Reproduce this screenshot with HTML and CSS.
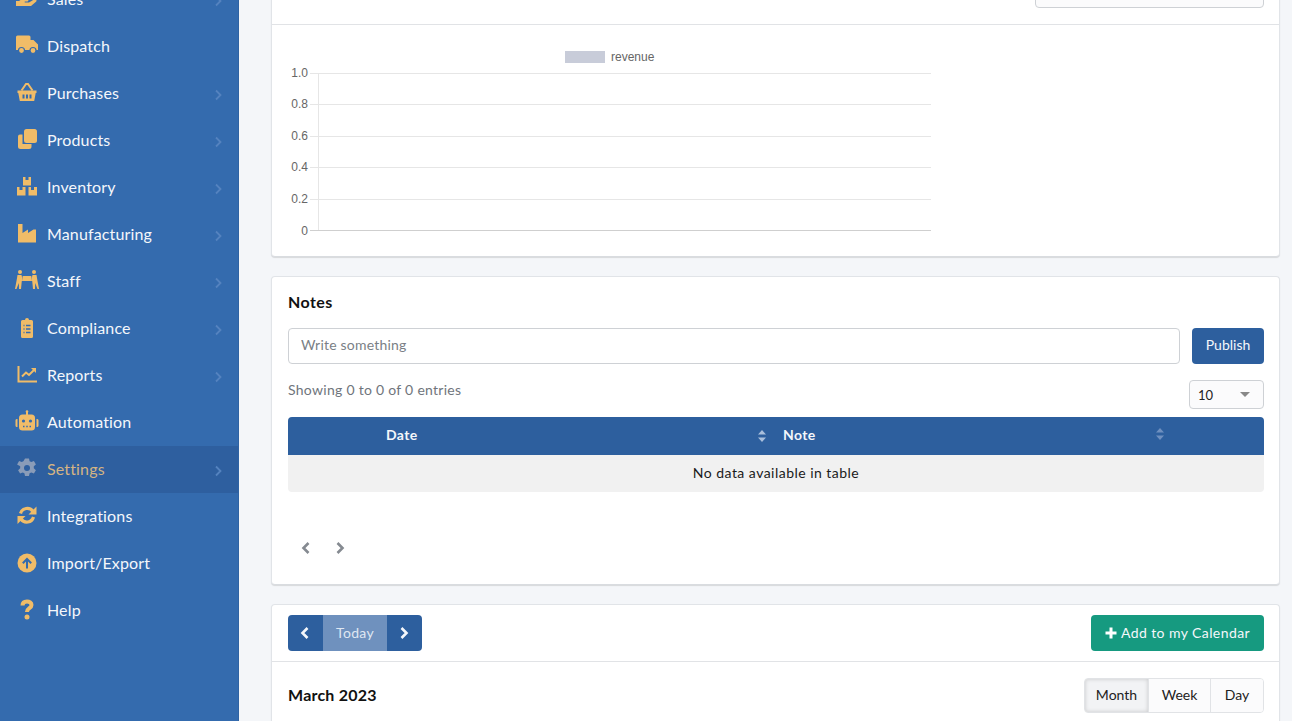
FILE: index.html
```html
<!DOCTYPE html>
<html lang="en">
<head>
<meta charset="utf-8">
<title>Dashboard</title>
<link rel="stylesheet" href="styles.css">
</head>
<body>
<div class="app">
  <aside class="sidebar">
    <nav class="nav">
      <a class="nav-item"><svg class="nav-icon" viewBox="0 0 24 24"><path d="M1 15h3l3-2h5c1.500 0 2 2 .5 2.500H10c-.6 0-.6 1 0 1h4l5-3c1.500-1 3.500 1 2 2.300L16 20H1z"/><rect x="8" y="3" width="9" height="8" rx="1"/></svg><span class="nav-label">Sales</span><svg class="nav-arrow" viewBox="0 0 8 12"><path d="M2 1.500 6.500 6 2 10.500"/></svg></a>
      <a class="nav-item"><svg class="nav-icon" viewBox="0 0 24 24"><path d="M2.500 2.500H14a1.500 1.500 0 0 1 1.500 1.500V7H18.500L23 11.500V17H1V4A1.500 1.500 0 0 1 2.500 2.500z"/><circle class="hole" cx="6.500" cy="17.500" r="3"/><circle class="hole" cx="18" cy="17.500" r="3"/></svg><span class="nav-label">Dispatch</span></a>
      <a class="nav-item"><svg class="nav-icon" viewBox="0 0 24 24"><path d="M2.500 10.500h19v2.500h-.8l-1.500 8H4.800l-1.500-8h-.8z"/><path class="line-gold" d="M6.500 10.500 11 4h2l4.500 6.500"/><path class="line-hole" d="M8.500 14.500v4M12 14.500v4M15.500 14.500v4"/></svg><span class="nav-label">Purchases</span><svg class="nav-arrow" viewBox="0 0 8 12"><path d="M2 1.500 6.500 6 2 10.500"/></svg></a>
      <a class="nav-item"><svg class="nav-icon" viewBox="0 0 24 24"><path d="M5 7.500h2.500V17h9v2.500A2.500 2.500 0 0 1 14 22H5.500A2.500 2.500 0 0 1 3 19.500v-10A2 2 0 0 1 5 7.500z"/><rect x="9" y="2" width="13" height="14" rx="2.500"/></svg><span class="nav-label">Products</span><svg class="nav-arrow" viewBox="0 0 8 12"><path d="M2 1.500 6.500 6 2 10.500"/></svg></a>
      <a class="nav-item"><svg class="nav-icon" viewBox="0 0 24 24"><path d="M8 3h2.500v3h3V3H16v8.500H8zM2 13h2.500v3h3v-3H10.500v8.500H2zM13.500 13H16v3h3v-3h3v8.500h-8.500z"/></svg><span class="nav-label">Inventory</span><svg class="nav-arrow" viewBox="0 0 8 12"><path d="M2 1.500 6.500 6 2 10.500"/></svg></a>
      <a class="nav-item"><svg class="nav-icon" viewBox="0 0 24 24"><path d="M3 3h4.500v9L13 8.500V12l5.500-3.500h2.500V21.500H3z"/></svg><span class="nav-label">Manufacturing</span><svg class="nav-arrow" viewBox="0 0 8 12"><path d="M2 1.500 6.500 6 2 10.500"/></svg></a>
      <a class="nav-item"><svg class="nav-icon" viewBox="0 0 24 24"><circle cx="5" cy="4" r="2"/><circle cx="19" cy="4" r="2"/><rect x="7.500" y="8" width="9" height="5" rx=".8"/><path d="M2.500 7h4l1.500 6H6.800L6 21H4l-.2-6L1.500 21H0l1.500-8zM21.500 7h-4L16 13h1.200l.8 8h2l.2-6 2.300 6H24l-1.500-8z"/></svg><span class="nav-label">Staff</span><svg class="nav-arrow" viewBox="0 0 8 12"><path d="M2 1.500 6.500 6 2 10.500"/></svg></a>
      <a class="nav-item"><svg class="nav-icon" viewBox="0 0 24 24"><path d="M7.500 5H10a2 2 0 0 1 4 0h2.500A1.500 1.500 0 0 1 18 6.500V21.500A1.500 1.500 0 0 1 16.500 23h-9A1.500 1.500 0 0 1 6 21.500V6.500A1.500 1.500 0 0 1 7.500 5z"/><path class="line-hole thin" d="M8.500 10.500h1M11 10.500h4.500M8.500 14h1M11 14h4.500M8.500 17.500h1M11 17.500h4.500"/></svg><span class="nav-label">Compliance</span><svg class="nav-arrow" viewBox="0 0 8 12"><path d="M2 1.500 6.500 6 2 10.500"/></svg></a>
      <a class="nav-item"><svg class="nav-icon" viewBox="0 0 24 24"><path class="line-gold" d="M3.500 4v15.500H22"/><path class="line-gold" d="M7 14.500l4-4 3 2.500 5-5"/><path d="M16 6h5v5z"/></svg><span class="nav-label">Reports</span><svg class="nav-arrow" viewBox="0 0 8 12"><path d="M2 1.500 6.500 6 2 10.500"/></svg></a>
      <a class="nav-item"><svg class="nav-icon" viewBox="0 0 24 24"><rect x="11" y="2" width="2" height="4"/><circle cx="12" cy="2.500" r="1.300"/><rect x="4" y="5.500" width="16" height="16" rx="3.500"/><path d="M.5 11.500A1.500 1.500 0 0 1 2.500 10v8A1.500 1.500 0 0 1 .5 16.500zM23.500 11.500A1.500 1.500 0 0 0 21.500 10v8A1.500 1.500 0 0 0 23.500 16.500z"/><circle class="eye" cx="8.500" cy="12" r="1.600"/><circle class="eye" cx="15.500" cy="12" r="1.600"/><path class="line-hole thin" d="M8 17.500h1.500M11.250 17.500h1.500M14.500 17.500h1.500"/></svg><span class="nav-label">Automation</span></a>
      <a class="nav-item is-active"><svg class="nav-icon" viewBox="0 0 24 24"><path d="M10 2.500h4l.6 2.800 1.700.8 2.600-1.100 2 3.400-2.100 1.900v2l2.100 1.900-2 3.400-2.600-1.100-1.700.8-.6 2.800h-4l-.6-2.800-1.700-.8-2.600 1.100-2-3.400 2.100-1.900v-2L2.100 8.400l2-3.400 2.600 1.100 1.700-.8z"/><circle class="hole-active" cx="12" cy="12" r="3"/></svg><span class="nav-label">Settings</span><svg class="nav-arrow" viewBox="0 0 8 12"><path d="M2 1.500 6.500 6 2 10.500"/></svg></a>
      <a class="nav-item"><svg class="nav-icon" viewBox="0 0 24 24"><path class="line-gold wide" d="M5.500 10.500A7 7 0 0 1 18 8.500"/><path d="M21.500 3.500v8h-8z"/><path class="line-gold wide" d="M18.500 14A7 7 0 0 1 6 16"/><path d="M2.500 21v-8h8z"/></svg><span class="nav-label">Integrations</span></a>
      <a class="nav-item"><svg class="nav-icon" viewBox="0 0 24 24"><circle cx="12" cy="13" r="9.500"/><path class="line-hole" d="M12 18.500v-9M7.800 13.300 12 9l4.200 4.300"/></svg><span class="nav-label">Import/Export</span></a>
      <a class="nav-item"><svg class="nav-icon" viewBox="0 0 24 24"><path class="line-gold heavy" d="M7.500 8.500C7.500 5.500 9.500 4.500 12 4.500c2.500 0 4.500 1.300 4.500 3.500 0 3.500-4.500 3-4.500 7"/><circle cx="12" cy="20" r="2.500"/></svg><span class="nav-label">Help</span></a>
    </nav>
  </aside>

  <main class="content">
    <section class="card card-chart">
      <header class="card-top">
        <div class="range-select"></div>
      </header>
      <div class="chart-body">
        <svg class="chart" width="660" height="232" viewBox="0 0 660 232">
          <rect class="legend" x="277" y="26" width="40" height="12"/>
          <text class="legend-text" x="323" y="36">revenue</text>
          <g class="grid">
            <path d="M22 48.500H643M22 79.500H643M22 111.500H643M22 142.500H643M22 174.500H643"/>
            <path d="M30.500 48V206"/>
          </g>
          <path class="baseline" d="M22 205.500H643"/>
          <g class="ticks">
            <text x="20" y="52">1.0</text>
            <text x="20" y="83">0.8</text>
            <text x="20" y="115">0.6</text>
            <text x="20" y="146">0.4</text>
            <text x="20" y="178">0.2</text>
            <text x="20" y="210">0</text>
          </g>
        </svg>
      </div>
    </section>

    <section class="card card-notes">
      <h2 class="card-title">Notes</h2>
      <div class="note-form">
        <input class="note-input" type="text" placeholder="Write something">
        <button class="btn btn-primary btn-publish">Publish</button>
      </div>
      <div class="table-meta">
        <span class="entries">Showing 0 to 0 of 0 entries</span>
        <div class="page-size"><span>10</span><i class="caret"></i></div>
      </div>
      <table class="notes-table">
        <thead>
          <tr>
            <th class="col-date"><div class="th-inner"><span>Date</span><svg class="sort sort-on" viewBox="0 0 10 14"><path d="M5 1 9 5.500H1zM5 13 1 8.500H9z"/></svg></div></th>
            <th class="col-note"><div class="th-inner"><span>Note</span><svg class="sort sort-off" viewBox="0 0 10 14"><path d="M5 1 9 5.500H1zM5 13 1 8.500H9z"/></svg></div></th>
          </tr>
        </thead>
        <tbody>
          <tr><td colspan="2">No data available in table</td></tr>
        </tbody>
      </table>
      <div class="pager">
        <svg class="pager-icon" viewBox="0 0 10 14"><path d="M7.500 2 2.500 7l5 5"/></svg>
        <svg class="pager-icon" viewBox="0 0 10 14"><path d="M2.500 2l5 5-5 5"/></svg>
      </div>
    </section>

    <section class="card card-calendar">
      <div class="cal-toolbar">
        <div class="btn-group">
          <button class="btn btn-primary btn-nav"><svg class="btn-chevron" viewBox="0 0 10 14"><path d="M7.500 2 2.500 7l5 5"/></svg></button>
          <button class="btn btn-today">Today</button>
          <button class="btn btn-primary btn-nav"><svg class="btn-chevron" viewBox="0 0 10 14"><path d="M2.500 2l5 5-5 5"/></svg></button>
        </div>
        <button class="btn btn-add"><svg class="plus" viewBox="0 0 12 12"><path d="M6 .5v11M.5 6h11"/></svg>Add to my Calendar</button>
      </div>
      <div class="cal-head">
        <h2 class="cal-title">March 2023</h2>
        <div class="view-group">
          <button class="view-btn view-month">Month</button>
          <button class="view-btn view-week">Week</button>
          <button class="view-btn view-day">Day</button>
        </div>
      </div>
    </section>
  </main>
</div>
</body>
</html>
```

FILE: styles.css
```css
* { box-sizing: border-box; }
html, body { margin: 0; height: 100%; overflow: hidden; }
body { font-family: "Lato", "Noto Sans", sans-serif; font-size: 14px; color: #111; background: #f4f6f9; }
button, input { font: inherit; }

.app { display: flex; height: 721px; overflow: hidden; }

.sidebar { width: 239px; flex: none; background: #346bae; border-right: 1px solid #2f63a3; overflow: hidden; }
.nav { display: flex; flex-direction: column; margin-top: -24px; }
.nav-item { display: flex; align-items: center; height: 47px; padding: 0 16px 2px 15px; color: #f4f7fb; font-size: 16px; letter-spacing: .15px; }
.nav-icon { width: 24px; height: 24px; flex: none; margin: -2px 8px 0 0; fill: #f0bc68; }
.nav-label { flex: 1; }
.nav-arrow { width: 8px; height: 12px; flex: none; margin: 4px 0 0 0; fill: none; stroke: #5583bf; stroke-width: 1.8; }
.hole { stroke: #346bae; stroke-width: 1.2; }
.eye { fill: #346bae; }
.line-gold { fill: none; stroke: #f0bc68; stroke-width: 2; }
.line-gold.wide { stroke-width: 3.2; }
.line-gold.heavy { stroke-width: 4; }
.line-hole { fill: none; stroke: #346bae; stroke-width: 2; }
.line-hole.thin { stroke-width: 1.5; }
.is-active { background: #2e5f9f; color: #d4b483; }
.is-active .nav-icon { fill: #8a9cb8; }
.hole-active { fill: #2e5f9f; }

.content { flex: 1; min-width: 0; padding: 0 12px 0 32px; margin-top: -41px; display: flex; flex-direction: column; gap: 19px; }

.card { flex: none; background: #fff; border: 1px solid #e1e4e8; border-bottom-color: #d9dce0; border-radius: 4px; box-shadow: 0 1px 1px rgba(0, 0, 0, .12); }
.card-chart { height: 298px; }
.card-top { height: 65px; padding: 12px 15px 0 0; border-bottom: 1px solid #e1e3e6; display: flex; justify-content: flex-end; align-items: flex-start; }
.range-select { width: 229px; height: 36px; background: #fbfbfc; border: 1px solid #ced1d5; border-radius: 4px; }
.chart-body { padding: 0 0 0 16px; }
.chart { display: block; }
.legend { fill: #c8ccd9; }
.legend-text, .ticks text { font-family: "Liberation Sans", Arial, sans-serif; font-size: 12px; fill: #666; }
.ticks text { text-anchor: end; }
.grid path { fill: none; stroke: #e6e6e6; stroke-width: 1; }
.baseline { fill: none; stroke: #cfcfcf; stroke-width: 1; }

.card-notes { height: 309px; padding: 15px 15px 0 16px; }
.card-title { margin: 0; font-size: 16px; line-height: 20px; font-weight: 700; color: #111; letter-spacing: .4px; }
.note-form { display: flex; gap: 12px; margin-top: 16px; }
.note-input { flex: 1; min-width: 0; height: 36px; padding: 0 12px 3px; border: 1px solid #ced1d5; border-radius: 4px; color: #333; background: #fff; letter-spacing: .2px; }
.note-input::placeholder { color: #7a7f86; opacity: 1; }
.btn { height: 36px; border: 0; padding: 0 0 3px; color: #f4f7fb; cursor: pointer; }
.btn-primary { background: #2d5f9e; }
.btn-publish { width: 72px; border-radius: 4px; }

.table-meta { display: flex; justify-content: space-between; align-items: flex-start; margin-top: 16px; height: 37px; }
.entries { color: #6f757c; line-height: 20px; letter-spacing: .28px; }
.page-size { width: 75px; height: 29px; border: 1px solid #ced1d5; border-radius: 4px; background: #fbfbfc; display: flex; align-items: center; justify-content: space-between; padding: 0 13px 0 8px; font-size: 13px; color: #222; }
.caret { width: 0; height: 0; border: 5px solid transparent; border-top-color: #888; border-bottom-width: 0; }

.notes-table { width: 976px; border-collapse: collapse; table-layout: fixed; }
.notes-table th { height: 38px; background: #2d5f9e; color: #f4f7fb; font-weight: 700; text-align: left; padding: 0; letter-spacing: .4px; }
.notes-table th:first-child { border-top-left-radius: 4px; }
.notes-table th:last-child { border-top-right-radius: 4px; }
.col-date { width: 487px; }
.col-date .th-inner { padding: 0 8px 0 98px; }
.col-note .th-inner { padding: 0 99px 0 8px; }
.th-inner { display: flex; justify-content: space-between; align-items: center; }
.th-inner span { padding-bottom: 4px; }
.sort { width: 10px; height: 14px; }
.sort-on { fill: #a9bfdc; }
.sort-off { fill: #6f90bf; margin-top: -4px; }
.notes-table td { height: 37px; padding-bottom: 3px; background: #f1f1f1; text-align: center; color: #1a1a1a; border-radius: 0 0 4px 4px; letter-spacing: .47px; }

.pager { display: flex; gap: 24px; margin: 49px 0 0 13px; }
.pager-icon { width: 10px; height: 14px; fill: none; stroke: #858a91; stroke-width: 2.6; }

.card-calendar { height: 160px; }
.cal-toolbar { display: flex; justify-content: space-between; align-items: center; height: 57px; padding: 0 15px 0 16px; border-bottom: 1px solid #e1e3e6; }
.btn-group { display: flex; border-radius: 4px; overflow: hidden; }
.btn-nav { width: 35px; display: flex; align-items: center; justify-content: center; padding: 0 1px 0 0; }
.btn-chevron { width: 10px; height: 14px; fill: none; stroke: #f4f7fb; stroke-width: 2.6; }
.btn-today { width: 64px; padding-bottom: 1px; background: #6f91be; color: #dfe7f2; letter-spacing: .3px; }
.btn-add { display: flex; align-items: center; justify-content: center; gap: 4px; width: 173px; padding-bottom: 1px; background: #169a80; border-radius: 4px; letter-spacing: .42px; }
.plus { width: 12px; height: 12px; fill: none; stroke: #fff; stroke-width: 3; margin-top: 1px; }
.cal-head { display: flex; justify-content: space-between; align-items: center; padding: 16px 15px 0 16px; }
.cal-title { margin: 0; font-size: 16px; font-weight: 700; color: #111; letter-spacing: .22px; padding-bottom: 2px; }
.view-group { display: flex; height: 35px; border: 1px solid #e1e3e6; border-radius: 4px; overflow: hidden; }
.view-btn { border: 0; border-right: 1px solid #e1e3e6; background: #fbfbfc; color: #222; padding: 0 0 2px; }
.view-btn:last-child { border-right: 0; }
.view-month { width: 64px; background: #f2f3f5; box-shadow: inset 0 0 4px rgba(0, 0, 0, .18); }
.view-week { width: 62px; }
.view-day { width: 52px; }
```
